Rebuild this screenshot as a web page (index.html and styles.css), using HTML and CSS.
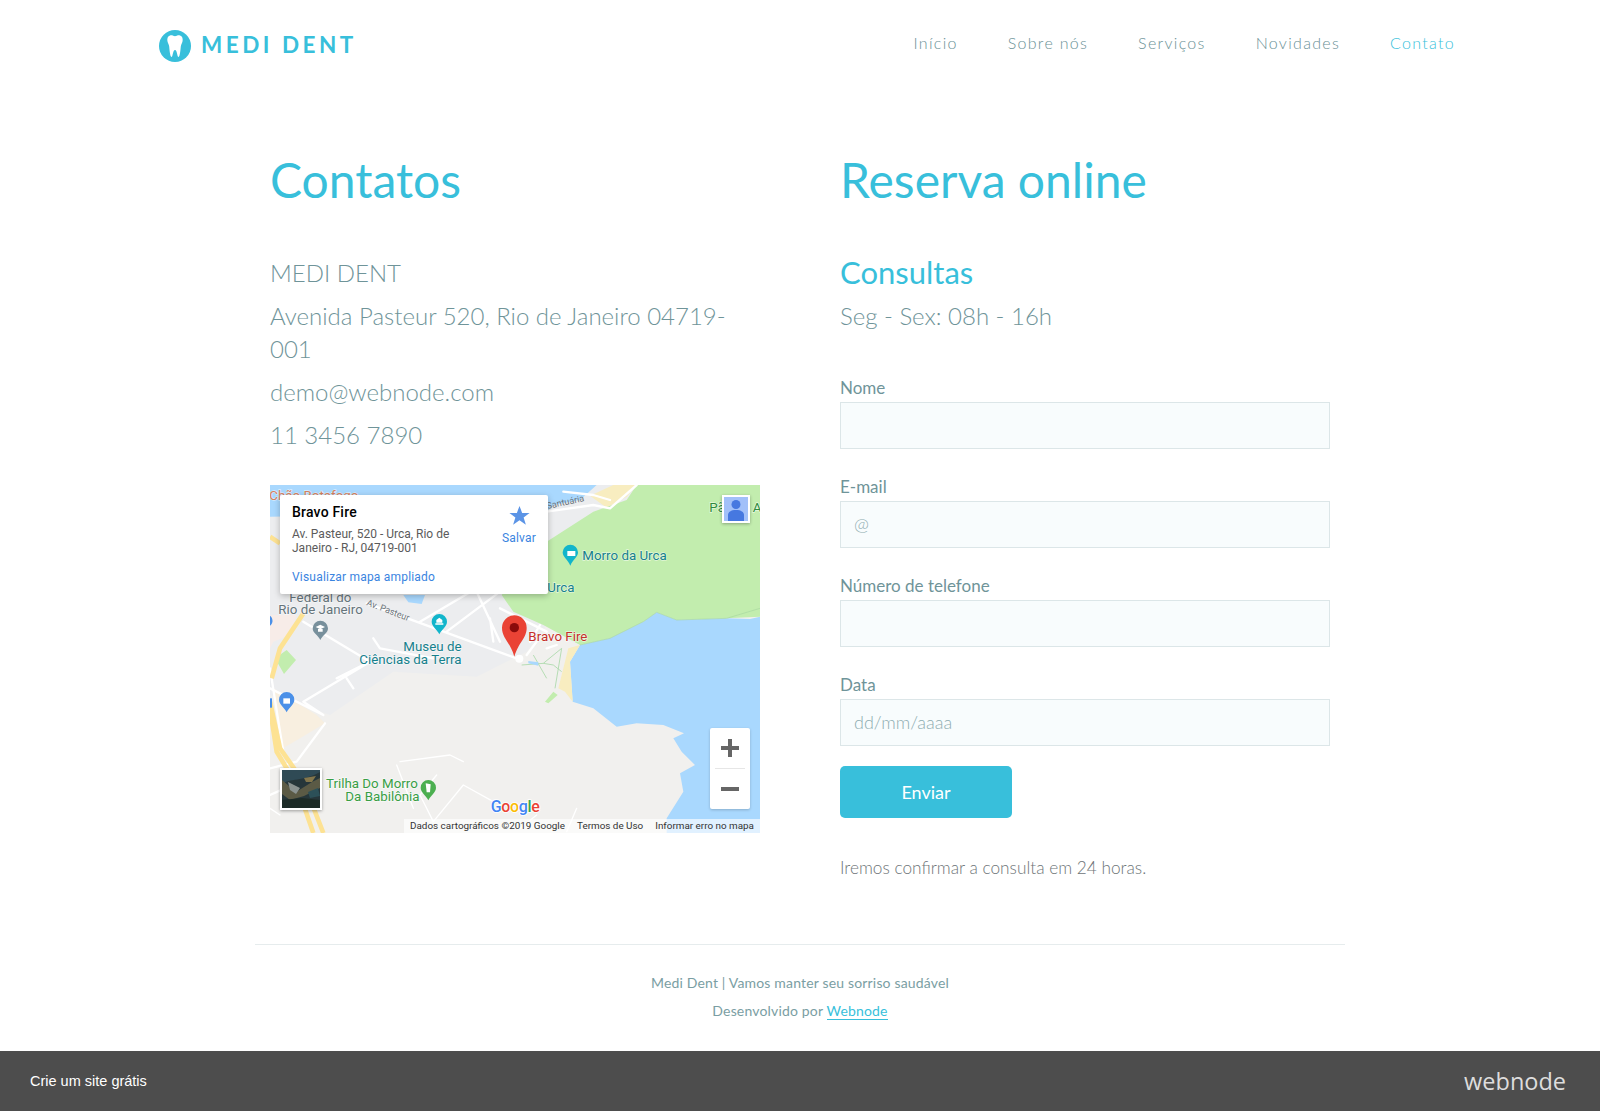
FILE: index.html
```html
<!DOCTYPE html>
<html lang="pt">
<head>
<meta charset="utf-8">
<title>Medi Dent - Contato</title>
<link rel="stylesheet" href="styles.css">
</head>
<body>
<header class="header">
  <a class="logo">
    <svg class="logo-icon" viewBox="0 0 32 32"><circle cx="16" cy="16" r="16" fill="#38bfdb"/><path d="M11 5.500c2-.5 3.500.5 5 .8 1.500-.3 3-1.300 5-.8 2.300.6 3 3 2.600 5.500-.4 2.300-1.500 3.400-1.800 5.600-.3 2.500-.8 10.400-2.300 10.400-1.400 0-1.300-7-3.500-7s-2.100 7-3.500 7c-1.500 0-2-7.900-2.300-10.400-.3-2.200-1.400-3.300-1.800-5.600C8 8.500 8.700 6.100 11 5.500z" fill="#fff"/></svg>
    <span class="logo-text">MEDI DENT</span>
  </a>
  <nav class="nav">
    <a>Início</a><a>Sobre nós</a><a>Serviços</a><a>Novidades</a><a class="active">Contato</a>
  </nav>
</header>

<main class="main">
  <section class="col">
    <h1>Contatos</h1>
    <div class="info">
      <p>MEDI DENT</p>
      <p>Avenida Pasteur 520, Rio de Janeiro 04719-001</p>
      <p>demo@webnode.com</p>
      <p>11 3456 7890</p>
    </div>
    <div class="map">
      <svg class="map-canvas" viewBox="30 30 1470 1044" preserveAspectRatio="none">
        <rect x="30" y="30" width="1470" height="1044" fill="#f1f0ee"/>
        <path d="M30 30H1130V400L860 450 800 530 650 605 400 590 210 720 30 660Z" fill="#ecedef"/>
        <path d="M30 30H1010L960 75 880 90 860 110 30 125Z" fill="#a9d8fe"/>
        <path d="M990 62 1060 30H1130L1100 65 1040 98Z" fill="#f8edc0"/>
        <path d="M1130 30H1500V425L1400 430 1250 435 1190 412 1150 440 1050 490 960 510 850 450 760 410 725 360 860 200 1000 110 1100 75Z" fill="#c2edae"/>
        <path d="M1500 425 1470 432 1400 430 1250 435 1190 412 1150 440 1050 490 960 510 930 560 938 680 1000 700 1070 755 1130 745 1210 750 1272 775 1240 790 1265 830 1305 870 1260 895 1270 950 1220 1030V1074H1500Z" fill="#a9d8fe"/>
        <path d="M960 510 930 560 938 680 915 650 895 640 925 520Z" fill="#f8edc0"/>
        <path d="M45 550 80 525 108 555 72 597Z M855 680 880 650 893 660 865 685Z" fill="#c2edae"/>
        <path d="M430 360H495L485 387 445 382Z" fill="#a9d8fe"/>
        <path d="M40 640 170 720 195 745 120 790 60 825Z" fill="#f8efe0"/>
        <path d="M30 420H110L90 480 40 500 30 520Z" fill="#f7ece8"/>
        <g class="roads">
          <path d="M320 385 770 550M480 440 650 340M560 470 720 350M650 350 720 500M720 400 860 470M130 440 330 560 230 610M330 560 130 680 190 720M340 490 360 520 520 550M690 430 700 500M260 610 280 640M30 580 60 770 70 830M195 745 110 860 30 880M30 960 120 920M810 500 840 450M800 540 830 500M860 520 890 510M30 640 190 720"/>
          <path d="M860 110 1000 90 1050 100 1130 30M910 50 1000 60 1050 75"/>
          <path class="thin" d="M410 870 460 1000M420 860 570 840 610 860M520 1040 610 930 700 980M420 980 480 960 520 1040M780 1060 830 1020M920 1070 950 1000M30 1000 60 1020M480 960 530 900"/>
        </g>
        <g fill="none" stroke="#fde293" stroke-width="14">
          <path d="M130 415 60 520 35 610"/>
          <path d="M30 680 60 820 130 920 190 1074"/>
          <path d="M30 700 50 830 110 930 160 1074"/>
          <path d="M30 185 60 205"/>
        </g>
        <circle cx="778" cy="551" r="12" fill="#fff"/>
        <g fill="none" stroke="#aad9a8" stroke-width="2.500"><path d="M785 570 850 565 905 520 885 640M820 540 860 610M850 565 880 570 905 590"/></g>
        <path d="M805 558 835 562 835 572 805 565Z" fill="#a9d8fe"/>
        <path d="M960 510 1050 490 1150 440 1190 412 1250 435 1400 430 1500 400" fill="none" stroke="#a8d8a0" stroke-width="2"/>

        <text class="t t-orange" x="28" y="76">Chão Botafogo</text>
        <text class="t t-gray" x="88" y="380">Federal do</text>
        <text class="t t-gray" x="55" y="418">Rio de Janeiro</text>
        <text class="t-sm" transform="translate(318 390) rotate(21)">Av. Pasteur</text>
        <text class="t-sm" transform="translate(862 102) rotate(-12)">Santuária</text>
        <text class="t t-teal" x="430" y="529">Museu de</text>
        <text class="t t-teal" x="298" y="568">Ciências da Terra</text>
        <text class="t t-teal" x="967" y="256">Morro da Urca</text>
        <text class="t t-teal" x="862" y="352">Urca</text>
        <text class="t t-red" x="805" y="499">Bravo Fire</text>
        <text class="t t-green" x="198" y="940">Trilha Do Morro</text>
        <text class="t t-green" x="256" y="979">Da Babilônia</text>
        <text class="t t-dgreen" x="1348" y="112">Pã</text>
        <text class="t t-dgreen" x="1478" y="112">A</text>

        <path d="M515 440A23 23 0 1 1 561 440C561 455 545 462 538 478 531 462 515 455 515 440Z" fill="#12b5cb"/>
        <path d="M526 449H550V445H526ZM529 443H547V435L538 428 529 435Z" fill="#fff"/>
        <path d="M908 232A23 23 0 1 1 954 232C954 247 938 254 931 272 924 254 908 247 908 232Z" fill="#12b5cb"/>
        <path d="M922 228H946V243H922Z" fill="#fff"/>
        <path d="M158 460A23 23 0 1 1 204 460C204 475 188 480 181 495 174 480 158 475 158 460Z" fill="#78909c"/>
        <path d="M167 456 181 449 195 456 181 463Z M174 462H188V470H174Z" fill="#fff"/>
        <path d="M57 674A23 23 0 1 1 103 674C103 689 87 696 80 712 73 696 57 689 57 674Z" fill="#4a90e8"/>
        <path d="M70 670H90V686H70Z" fill="#fff"/>
        <path d="M482 938A23 23 0 1 1 528 938C528 953 512 960 505 976 498 960 482 953 482 938Z" fill="#4caf50"/>
        <path d="M497 925 512 928 510 952H500Z" fill="#fff"/>
        <path d="M30 422C40 430 40 445 30 452Z" fill="#4a90e8"/>
        <rect x="30" y="670" width="6" height="28" fill="#4a90e8"/>
        <path d="M763 545C750 500 726 490 726 458A37 37 0 0 1 800 458C800 490 776 500 763 545Z" fill="#ea4335"/>
        <circle cx="763" cy="458" r="14" fill="#8a0b0b"/>
        <text class="google" x="692" y="1012"><tspan fill="#4285f4">G</tspan><tspan fill="#ea4335">o</tspan><tspan fill="#fbbc05">o</tspan><tspan fill="#4285f4">g</tspan><tspan fill="#34a853">l</tspan><tspan fill="#ea4335">e</tspan></text>
      </svg>

      <div class="popup">
        <div class="popup-body">
          <strong class="popup-title">Bravo Fire</strong>
          <p class="popup-addr">Av. Pasteur, 520 - Urca, Rio de Janeiro - RJ, 04719-001</p>
          <a class="popup-link">Visualizar mapa ampliado</a>
        </div>
        <div class="popup-save">
          <svg class="star" viewBox="0 0 24 24"><path d="M12 1l3 8h8.500l-6.800 5.200 2.600 8.300L12 17.500l-7.300 5 2.600-8.300L.5 9H9z" fill="#5b94e6"/></svg>
          <span>Salvar</span>
        </div>
      </div>

      <div class="pegman">
        <svg viewBox="0 0 24 24"><rect width="24" height="24" fill="#a2c0f9"/><circle cx="12" cy="7.500" r="4.500" fill="#4678e0"/><path d="M4 24v-6c0-3 3-5 8-5s8 2 8 5v6z" fill="#4678e0"/></svg>
      </div>
      <div class="thumb">
        <svg viewBox="0 0 38 38" preserveAspectRatio="none"><rect width="38" height="38" fill="#26363a"/><path d="M0 14C8 8 20 12 38 2V0H0Z" fill="#2f4a55"/><path d="M0 10 14 22 30 12 38 8V18L22 26 8 30 0 24Z" fill="#5b5a45"/><path d="M6 12 18 18 14 24 8 20Z" fill="#8a9290"/><path d="M22 8 34 6 30 12 24 12Z" fill="#83764c"/><path d="M0 30 20 28 38 30V38H0Z" fill="#1c2a26"/><path d="M26 22 36 18 38 26 28 28Z" fill="#2c5058"/></svg>
      </div>
      <div class="zoom">
        <span class="zoom-btn"><svg viewBox="0 0 18 18"><path d="M7 0h4v7h7v4h-7v7H7v-7H0V7h7z" fill="#666"/></svg></span>
        <i class="zoom-sep"></i>
        <span class="zoom-btn"><svg viewBox="0 0 18 18"><path d="M0 7h18v4H0z" fill="#666"/></svg></span>
      </div>
      <div class="attrib"><span>Dados cartográficos ©2019 Google</span><span>Termos de Uso</span><span>Informar erro no mapa</span></div>
    </div>
  </section>

  <section class="col">
    <h1>Reserva online</h1>
    <h2>Consultas</h2>
    <p class="hours">Seg - Sex: 08h - 16h</p>
    <form class="form">
      <label class="field"><span>Nome</span><div class="input"></div></label>
      <label class="field"><span>E-mail</span><div class="input ph">@</div></label>
      <label class="field"><span>Número de telefone</span><div class="input"></div></label>
      <label class="field"><span>Data</span><div class="input ph">dd/mm/aaaa</div></label>
      <button class="btn" type="button">Enviar</button>
    </form>
    <p class="note">Iremos confirmar a consulta em 24 horas.</p>
  </section>
</main>

<footer class="footer">
  <p>Medi Dent | Vamos manter seu sorriso saudável</p>
  <p>Desenvolvido por <a>Webnode</a></p>
</footer>

<div class="bar">
  <span class="bar-text">Crie um site grátis</span>
  <span class="bar-logo">webnode</span>
</div>
</body>
</html>
```
FILE: styles.css
```css
* { box-sizing: border-box; }
html, body { margin: 0; padding: 0; background: #fff; }
body { font-family: "Lato", "Noto Sans", sans-serif; color: #6f9499; height: 1111px; overflow: hidden; display: flex; flex-direction: column; }
p, h1, h2 { margin: 0; }

.header { display: flex; justify-content: space-between; align-items: center; height: 88px; padding: 0 145px 0 159px; }
.logo { display: flex; align-items: center; gap: 10px; }
.logo-icon { width: 32px; height: 32px; transform: translateY(2px); }
.logo-text { font-family: "Lato", sans-serif; font-weight: 700; font-size: 22.500px; letter-spacing: 3.500px; color: #38bfdb; }
.nav { display: flex; gap: 50px; font-size: 16px; letter-spacing: 1.300px; font-weight: 300; color: #6a9196; padding-bottom: 4px; }
.nav .active { color: #38bfdb; }

.main { display: grid; grid-template-columns: 490px 490px; column-gap: 80px; padding: 0 270px; height: 856px; }
.col { padding-top: 59px; }
h1 { font-weight: 400; font-size: 48px; line-height: 66px; color: #38bfdb; }
.info { margin-top: 43px; font-size: 24px; font-weight: 300; line-height: 33px; width: 490px; }
.info p { margin-bottom: 10px; }
.map { position: relative; width: 490px; height: 348px; margin-top: 34px; overflow: hidden; }
.map-canvas { display: block; width: 490px; height: 348px; }
.roads { fill: none; stroke: #fff; stroke-width: 7; stroke-linejoin: round; stroke-linecap: round; }
.roads .thin { stroke-width: 4; }
.t { font-family: "Roboto", sans-serif; font-size: 40px; paint-order: stroke; stroke: rgba(255,255,255,.6); stroke-width: 4px; }
.t-orange { fill: #d5805f; }
.t-gray { fill: #65747b; }
.t-teal { fill: #15808c; }
.t-red { fill: #c5302a; }
.t-green { fill: #389e45; }
.t-dgreen { fill: #2e8b3d; }
.t-sm { font-family: "Roboto", sans-serif; font-size: 27px; fill: #6c757b; }
.google { font-family: "Roboto", sans-serif; font-size: 48px; font-weight: 500; letter-spacing: -1px; paint-order: stroke; stroke: #fff; stroke-width: 5px; }

.popup { position: absolute; left: 10px; top: 10px; width: 268px; height: 99px; background: #fff; box-shadow: 0 2px 6px rgba(0,0,0,.25); border-radius: 2px; display: flex; justify-content: space-between; font-family: "Roboto", sans-serif; }
.popup-body { padding: 8px 0 0 12px; width: 190px; }
.popup-title { display: block; font-size: 14px; letter-spacing: .2px; font-weight: 500; line-height: 18px; color: #000; }
.popup-addr { font-size: 12px; line-height: 14px; color: #5b5b5b; margin-top: 6px; }
.popup-link { display: block; font-size: 12px; letter-spacing: .2px; line-height: 14px; color: #3a84df; margin-top: 15px; }
.popup-save { width: 60px; display: flex; flex-direction: column; align-items: center; font-size: 12px; letter-spacing: .15px; color: #3a84df; padding: 10px 0 0 0; margin-right: -1px; }
.star { width: 21px; height: 21px; margin-bottom: 5px; }

.pegman { position: absolute; left: 452px; top: 10px; width: 28px; height: 28px; border: 2px solid #fff; box-shadow: 0 1px 3px rgba(0,0,0,.3); }
.pegman svg, .thumb svg { display: block; width: 100%; height: 100%; }
.thumb { position: absolute; left: 10px; top: 283px; width: 42px; height: 42px; border: 2px solid #fff; box-shadow: 0 1px 3px rgba(0,0,0,.35); }
.zoom { position: absolute; left: 440px; top: 243px; width: 40px; height: 81px; background: #fff; border-radius: 2px; box-shadow: 0 1px 3px rgba(0,0,0,.2); display: flex; flex-direction: column; align-items: center; }
.zoom-btn { height: 40px; display: flex; align-items: center; justify-content: center; }
.zoom-btn svg { width: 18px; height: 18px; display: block; }
.zoom-sep { width: 30px; height: 1px; background: #e6e6e6; }
.attrib { position: absolute; right: 0; bottom: 0; height: 14px; display: flex; gap: 12px; padding: 0 6px; font-family: "Roboto", sans-serif; font-size: 9.900px; line-height: 14px; color: #333; background: rgba(255,255,255,.65); white-space: nowrap; }

h2 { font-weight: 400; font-size: 31px; line-height: 40px; color: #38bfdb; margin-top: 39px; }
.hours { font-size: 24px; font-weight: 300; line-height: 33px; margin-top: 7px; }
.form { margin-top: 45px; display: flex; flex-direction: column; }
.field { display: block; }
.field + .field { margin-top: 27px; }
.field span { display: block; font-size: 17px; line-height: 22px; color: #6f9499; margin-bottom: 3px; }
.input { height: 47px; background: #f8fcfd; border: 1px solid #dce6e8; padding: 0 13px 1px; display: flex; align-items: center; font-size: 18px; font-weight: 300; color: #8fadb1; }
.btn { width: 172px; height: 52px; margin-top: 20px; padding-bottom: 2px; border: 0; border-radius: 5px; background: #38bfdb; color: #fff; font-family: inherit; font-size: 18px; }
.note { margin-top: 38px; font-size: 17.250px; font-weight: 300; line-height: 24px; color: #6e7578; }

.footer { width: 1090px; margin: 0 auto; height: 107px; border-top: 1px solid #e6eced; padding-top: 24px; text-align: center; font-size: 14px; letter-spacing: .17px; line-height: 28px; color: #7a9ea3; font-weight: 400; }
.footer a { color: #38bfdb; border-bottom: 1px solid #38bfdb; }

.bar { height: 60px; background: #4d4d4d; display: flex; justify-content: space-between; align-items: center; padding: 0 34px 0 30px; }
.bar-text { font-family: "Liberation Sans", Arial, sans-serif; font-size: 14.500px; color: #fff; }
.bar-logo { font-family: "Open Sans", sans-serif; font-weight: 400; font-size: 23.500px; color: #ddd; }
```
